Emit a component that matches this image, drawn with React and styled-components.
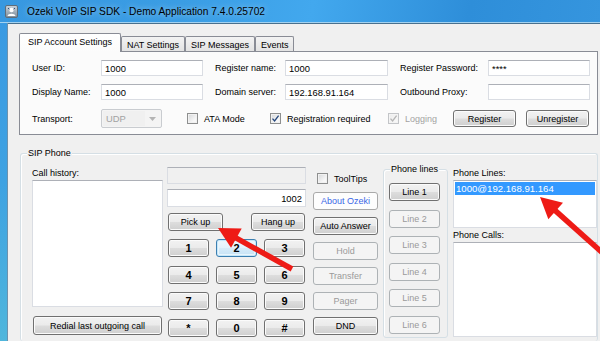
import React from "react";
import styled, { createGlobalStyle, css } from "styled-components";

const Global = createGlobalStyle`
  html, body { margin: 0; padding: 0; background: #f0f0f0; overflow: hidden; }
  #root { width: 600px; height: 341px; }
`;

const UI = `"Liberation Sans", Arial, sans-serif`;

const Window = styled.div`
  position: relative;
  width: 600px;
  height: 341px;
  overflow: hidden;
  background: #f0f0f0;
  font-family: ${UI};
  font-size: 9px;
  color: #000;
  display: flex;
  flex-direction: column;
`;

const TitleBar = styled.div`
  flex: none;
  height: 22px;
  display: flex;
  align-items: center;
  gap: 9px;
  padding-left: 5px;
  background: linear-gradient(100deg, #3898e0 0%, #3a9de4 30%, #42a8ee 52%, #2e8ed9 78%, #3595de 100%);
  border-bottom: 1px solid #a3d2f0;
`;

const Title = styled.span`
  font-family: ${UI};
  font-size: 10.2px;
  color: #000;
  text-shadow: 0 0 6px rgba(255,255,255,0.55);
  letter-spacing: 0;
`;

const Body = styled.div`
  flex: 1;
  display: flex;
  min-height: 0;
`;

const SideFrame = styled.div`
  flex: none;
  width: 7px;
  background: linear-gradient(180deg, #3a9ae2 0%, #3ea2e2 50%, #4fb6dc 100%);
  border-right: 1px solid #6d92ad;
`;

const Client = styled.div`
  flex: 1;
  border-top: 1px solid #48708e;
  padding: 9px 2px 0 11px;
  display: flex;
  flex-direction: column;
`;

/* ---------- Tabs ---------- */
const TabStrip = styled.div`
  display: flex;
  align-items: flex-end;
  height: 18px;
  position: relative;
  z-index: 1;
`;

const Tab = styled.div`
  box-sizing: border-box;
  border: 1px solid #898c95;
  border-bottom: none;
  margin-right: -1px;
  display: flex;
  align-items: center;
  justify-content: center;
  white-space: nowrap;
  ${(p) =>
    p.$active
      ? css`
          height: 19px;
          margin-bottom: -1px;
          padding: 0 8px 2px;
          background: linear-gradient(#ffffff, #fbfbfb);
          border-radius: 2px 2px 0 0;
        `
      : css`
          height: 15px;
          padding: 1px 5px 0;
          background: linear-gradient(#f3f3f3, #e3e3e3);
          border-radius: 2px 2px 0 0;
          & + & {
            margin-left: 1px;
          }
        `}
`;

const TabPanel = styled.div`
  box-sizing: border-box;
  height: 84px;
  border: 1px solid #898c95;
  background: #fbfbfb;
  padding: 8px 0 0 12px;
  display: flex;
  flex-direction: column;
  gap: 8px;
`;

const Row = styled.div`
  display: flex;
  align-items: center;
  height: ${(p) => p.$h || 16}px;
  margin-top: ${(p) => p.$mt || 0}px;
`;

const Label = styled.span`
  flex: none;
  width: ${(p) => (p.$w ? `${p.$w}px` : "auto")};
  margin-left: ${(p) => p.$ml || 0}px;
  white-space: nowrap;
  color: ${(p) => (p.$disabled ? "#a3a3a3" : "#000")};
`;

const TextBox = styled.div`
  box-sizing: border-box;
  flex: none;
  width: ${(p) => p.$w}px;
  height: ${(p) => p.$h || 16}px;
  border: 1px solid #dadde3;
  border-top-color: #adb0b7;
  background: ${(p) => (p.$readOnly ? "#f0f0f0" : "#fff")};
  padding: 0 3px;
  display: flex;
  align-items: center;
  justify-content: ${(p) => (p.$right ? "flex-end" : "flex-start")};
  font-size: 9.4px;
  white-space: nowrap;
  overflow: hidden;
`;

const Combo = styled.div`
  box-sizing: border-box;
  flex: none;
  width: 61px;
  height: 19px;
  border: 1px solid #c9ccd0;
  border-radius: 2px;
  background: #f4f4f4;
  display: flex;
  align-items: stretch;
  padding: 1px;
  color: #a2a2a2;
`;

const ComboText = styled.span`
  flex: 1;
  background: #f0f0f0;
  display: flex;
  align-items: center;
  padding-left: 3px;
  font-size: 9.4px;
`;

const ComboArrow = styled.span`
  width: 15px;
  display: flex;
  align-items: center;
  justify-content: center;
`;

const CheckItem = styled.label`
  flex: none;
  display: flex;
  align-items: center;
  gap: 6px;
  width: ${(p) => (p.$w ? `${p.$w}px` : "auto")};
  margin-left: ${(p) => p.$ml || 0}px;
  white-space: nowrap;
  color: ${(p) => (p.$disabled ? "#a3a3a3" : "#000")};
`;

const Box = styled.span`
  box-sizing: border-box;
  flex: none;
  width: 11px;
  height: 11px;
  border: 1px solid ${(p) => (p.$disabled ? "#c3c5c8" : "#8e8f8f")};
  background: ${(p) =>
    p.$disabled
      ? "linear-gradient(135deg, #ececec, #fafafa)"
      : "linear-gradient(135deg, #d4d6d8, #f7f7f7 70%)"};
  box-shadow: inset 0 0 0 1px ${(p) => (p.$disabled ? "#f4f4f4" : "#f1f1f1")};
  display: flex;
  align-items: center;
  justify-content: center;
`;

const Button = styled.button`
  box-sizing: border-box;
  flex: none;
  width: ${(p) => (p.$w ? `${p.$w}px` : "100%")};
  height: ${(p) => p.$h || 18}px;
  margin: 0;
  margin-left: ${(p) => p.$ml || 0}px;
  padding: 0;
  font-family: ${UI};
  font-size: ${(p) => (p.$key ? "11px" : "9px")};
  font-weight: ${(p) => (p.$key ? "bold" : "normal")};
  color: #000;
  border: 1px solid #707070;
  border-radius: 3px;
  background: linear-gradient(#f2f2f2 0%, #ebebeb 48%, #dddddd 52%, #cfcfcf 100%);
  box-shadow: inset 0 0 0 1px #fbfbfb;
  white-space: nowrap;
  ${(p) =>
    p.$focus &&
    css`
      border-color: #3c7fb1;
      box-shadow: inset 0 0 0 1px #c5e7fa, inset 0 0 0 2px #e9f5fc;
      background: linear-gradient(#eef7fd 0%, #e4f2fc 48%, #d6ebf9 52%, #c6e2f5 100%);
    `}
  ${(p) =>
    p.$link &&
    css`
      border-color: #a9a9a9;
      background: #fdfdfd;
      box-shadow: none;
      color: #3a67e6;
    `}
  &:disabled {
    border-color: #adb2b5;
    background: #f4f4f4;
    box-shadow: none;
    color: #9a9a9a;
  }
`;

/* ---------- SIP Phone group ---------- */
const GroupBox = styled.div`
  position: relative;
  box-sizing: border-box;
  border: 1px solid #d5dfe5;
  border-radius: 3px;
  box-shadow: inset 1px 1px 0 #fff;
`;

const MainGroup = styled(GroupBox)`
  margin: 18px 0 0 1px;
  flex: 1;
  border-bottom: none;
  padding: 13px 0 0 11px;
  display: flex;
  align-items: flex-start;
`;

const Legend = styled.span`
  position: absolute;
  top: -7px;
  left: ${(p) => p.$left || 6}px;
  padding: 0 1px;
  background: #f0f0f0;
  line-height: 12px;
  white-space: nowrap;
`;

const Column = styled.div`
  flex: none;
  width: ${(p) => p.$w}px;
  margin-left: ${(p) => p.$ml || 0}px;
  margin-top: ${(p) => p.$mt || 0}px;
  display: flex;
  flex-direction: column;
  gap: ${(p) => p.$gap || 0}px;
`;

const FieldLabel = styled.div`
  height: 13px;
  line-height: 12px;
  white-space: nowrap;
  margin-top: ${(p) => p.$mt || 0}px;
`;

const ListBox = styled.div`
  box-sizing: border-box;
  height: ${(p) => p.$h}px;
  border: 1px solid #dadde3;
  border-top-color: #adb0b7;
  background: #fff;
  padding: 1px;
`;

const ListItem = styled.div`
  height: 13px;
  line-height: 13px;
  padding-left: 1px;
  font-size: 9.6px;
  background: ${(p) => (p.$selected ? "#3399ff" : "transparent")};
  color: ${(p) => (p.$selected ? "#fff" : "#000")};
  white-space: nowrap;
`;

const CallRow = styled.div`
  display: flex;
  justify-content: space-between;
  margin-top: ${(p) => p.$mt || 0}px;
  padding: 0 1px 0 1px;
`;

const Keypad = styled.div`
  display: grid;
  grid-template-columns: 41px 41px 41px;
  grid-auto-rows: 18px;
  justify-content: space-between;
  row-gap: 8.6px;
  margin: 8px 1px 0 1px;
`;

const LinesGroup = styled(GroupBox)`
  flex: none;
  width: 65px;
  height: 169px;
  margin-left: 5px;
  margin-top: 2px;
  padding: 13px 0 0 5px;
  display: flex;
  flex-direction: column;
  gap: 8.5px;
`;

const Overlay = styled.svg`
  position: absolute;
  left: 0;
  top: 0;
  pointer-events: none;
`;

const Check = ({ color = "#24467c" }) => (
  <svg width="9" height="9" viewBox="0 0 9 9">
    <path d="M1.5 4.6 L3.6 7 L7.6 1.6" fill="none" stroke={color} strokeWidth="1.3" />
  </svg>
);

const AppIcon = () => (
  <svg width="13" height="13" viewBox="0 0 13 13">
    <defs>
      <linearGradient id="ig" x1="0" y1="0" x2="0" y2="1">
        <stop offset="0" stopColor="#c9d3dc" />
        <stop offset="1" stopColor="#7f8d9a" />
      </linearGradient>
    </defs>
    <rect x="0.5" y="0.5" width="12" height="12" rx="1.5" fill="url(#ig)" stroke="#5f6d7a" />
    <circle cx="6.5" cy="5" r="2.2" fill="#fff" />
    <path d="M2.5 11 C3 8 10 8 10.5 11 Z" fill="#fff" />
    <path d="M3 3 L4.3 4.2 M10 3 L8.7 4.2" stroke="#2b4b7a" strokeWidth="1" />
  </svg>
);

const Arrow = ({ x1, y1, x2, y2 }) => {
  const dx = x2 - x1;
  const dy = y2 - y1;
  const len = Math.hypot(dx, dy);
  const ux = dx / len;
  const uy = dy / len;
  const hl = 21;
  const hw = 11;
  const bx = x2 - ux * hl;
  const by = y2 - uy * hl;
  const px = -uy;
  const py = ux;
  const pts = `${x2},${y2} ${bx + px * hw},${by + py * hw} ${bx - px * hw},${by - py * hw}`;
  return (
    <g>
      <line x1={x1} y1={y1} x2={bx + ux * 2} y2={by + uy * 2} stroke="#ee1b16" strokeWidth="5.5" />
      <polygon points={pts} fill="#ee1b16" />
    </g>
  );
};

const keys = ["1", "2", "3", "4", "5", "6", "7", "8", "9", "*", "0", "#"];

export default function App() {
  return (
    <>
      <Global />
      <Window>
        <TitleBar>
          <AppIcon />
          <Title>Ozeki VoIP SIP SDK - Demo Application 7.4.0.25702</Title>
        </TitleBar>
        <Body>
          <SideFrame />
          <Client>
            <TabStrip>
              <Tab $active>SIP Account Settings</Tab>
              <Tab>NAT Settings</Tab>
              <Tab>SIP Messages</Tab>
              <Tab>Events</Tab>
            </TabStrip>
            <TabPanel>
              <Row>
                <Label $w={69}>User ID:</Label>
                <TextBox $w={102}>1000</TextBox>
                <Label $w={70} $ml={12}>Register name:</Label>
                <TextBox $w={103}>1000</TextBox>
                <Label $w={88} $ml={12}>Register Password:</Label>
                <TextBox $w={102}>****</TextBox>
              </Row>
              <Row>
                <Label $w={69}>Display Name:</Label>
                <TextBox $w={102}>1000</TextBox>
                <Label $w={70} $ml={12}>Domain server:</Label>
                <TextBox $w={103}>192.168.91.164</TextBox>
                <Label $w={88} $ml={12}>Outbound Proxy:</Label>
                <TextBox $w={102} />
              </Row>
              <Row $h={19} $mt={1}>
                <Label $w={69}>Transport:</Label>
                <Combo>
                  <ComboText>UDP</ComboText>
                  <ComboArrow>
                    <svg width="7" height="4" viewBox="0 0 7 4">
                      <path d="M0 0 H7 L3.5 4 Z" fill="#b4b4b4" />
                    </svg>
                  </ComboArrow>
                </Combo>
                <CheckItem $w={83} $ml={25}>
                  <Box />
                  ATA Mode
                </CheckItem>
                <CheckItem $w={118}>
                  <Box>
                    <Check />
                  </Box>
                  Registration required
                </CheckItem>
                <CheckItem $w={65} $disabled>
                  <Box $disabled>
                    <Check color="#b5b5b5" />
                  </Box>
                  Logging
                </CheckItem>
                <Button $w={63} $h={17}>Register</Button>
                <Button $w={63} $h={17} $ml={10}>Unregister</Button>
              </Row>
            </TabPanel>

            <MainGroup>
              <Legend>SIP Phone</Legend>

              <Column $w={131}>
                <FieldLabel>Call history:</FieldLabel>
                <ListBox $h={127} />
                <CallRow $mt={9}>
                  <Button $h={19}>Redial last outgoing call</Button>
                </CallRow>
              </Column>

              <Column $w={139} $ml={4}>
                <TextBox $w={139} $h={17} $readOnly />
                <TextBox $w={139} $h={18} $right style={{ marginTop: 5 }}>
                  1002
                </TextBox>
                <CallRow $mt={6}>
                  <Button $w={55}>Pick up</Button>
                  <Button $w={54}>Hang up</Button>
                </CallRow>
                <Keypad>
                  {keys.map((k) => (
                    <Button key={k} $key $w={41} $focus={k === "2"}>
                      {k}
                    </Button>
                  ))}
                </Keypad>
              </Column>

              <Column $w={65} $ml={7} $gap={7}>
                <CheckItem $ml={4} style={{ marginTop: 5, height: 13 }}>
                  <Box />
                  ToolTips
                </CheckItem>
                <Button $link>About Ozeki</Button>
                <Button>Auto Answer</Button>
                <Button disabled>Hold</Button>
                <Button disabled>Transfer</Button>
                <Button disabled>Pager</Button>
                <Button>DND</Button>
              </Column>

              <LinesGroup>
                <Legend $left={6}>Phone lines</Legend>
                <Button $w={51}>Line 1</Button>
                <Button $w={51} disabled>Line 2</Button>
                <Button $w={51} disabled>Line 3</Button>
                <Button $w={51} disabled>Line 4</Button>
                <Button $w={51} disabled>Line 5</Button>
                <Button $w={51} disabled>Line 6</Button>
              </LinesGroup>

              <Column $w={144} $ml={5}>
                <FieldLabel>Phone Lines:</FieldLabel>
                <ListBox $h={48}>
                  <ListItem $selected>1000@192.168.91.164</ListItem>
                </ListBox>
                <FieldLabel $mt={1}>Phone Calls:</FieldLabel>
                <ListBox $h={95} />
              </Column>
            </MainGroup>
          </Client>
        </Body>
        <Overlay width="600" height="341" viewBox="0 0 600 341">
          <Arrow x1={292} y1={269} x2={218} y2={228} />
          <Arrow x1={606} y1={256} x2={540} y2={197} />
        </Overlay>
      </Window>
    </>
  );
}
